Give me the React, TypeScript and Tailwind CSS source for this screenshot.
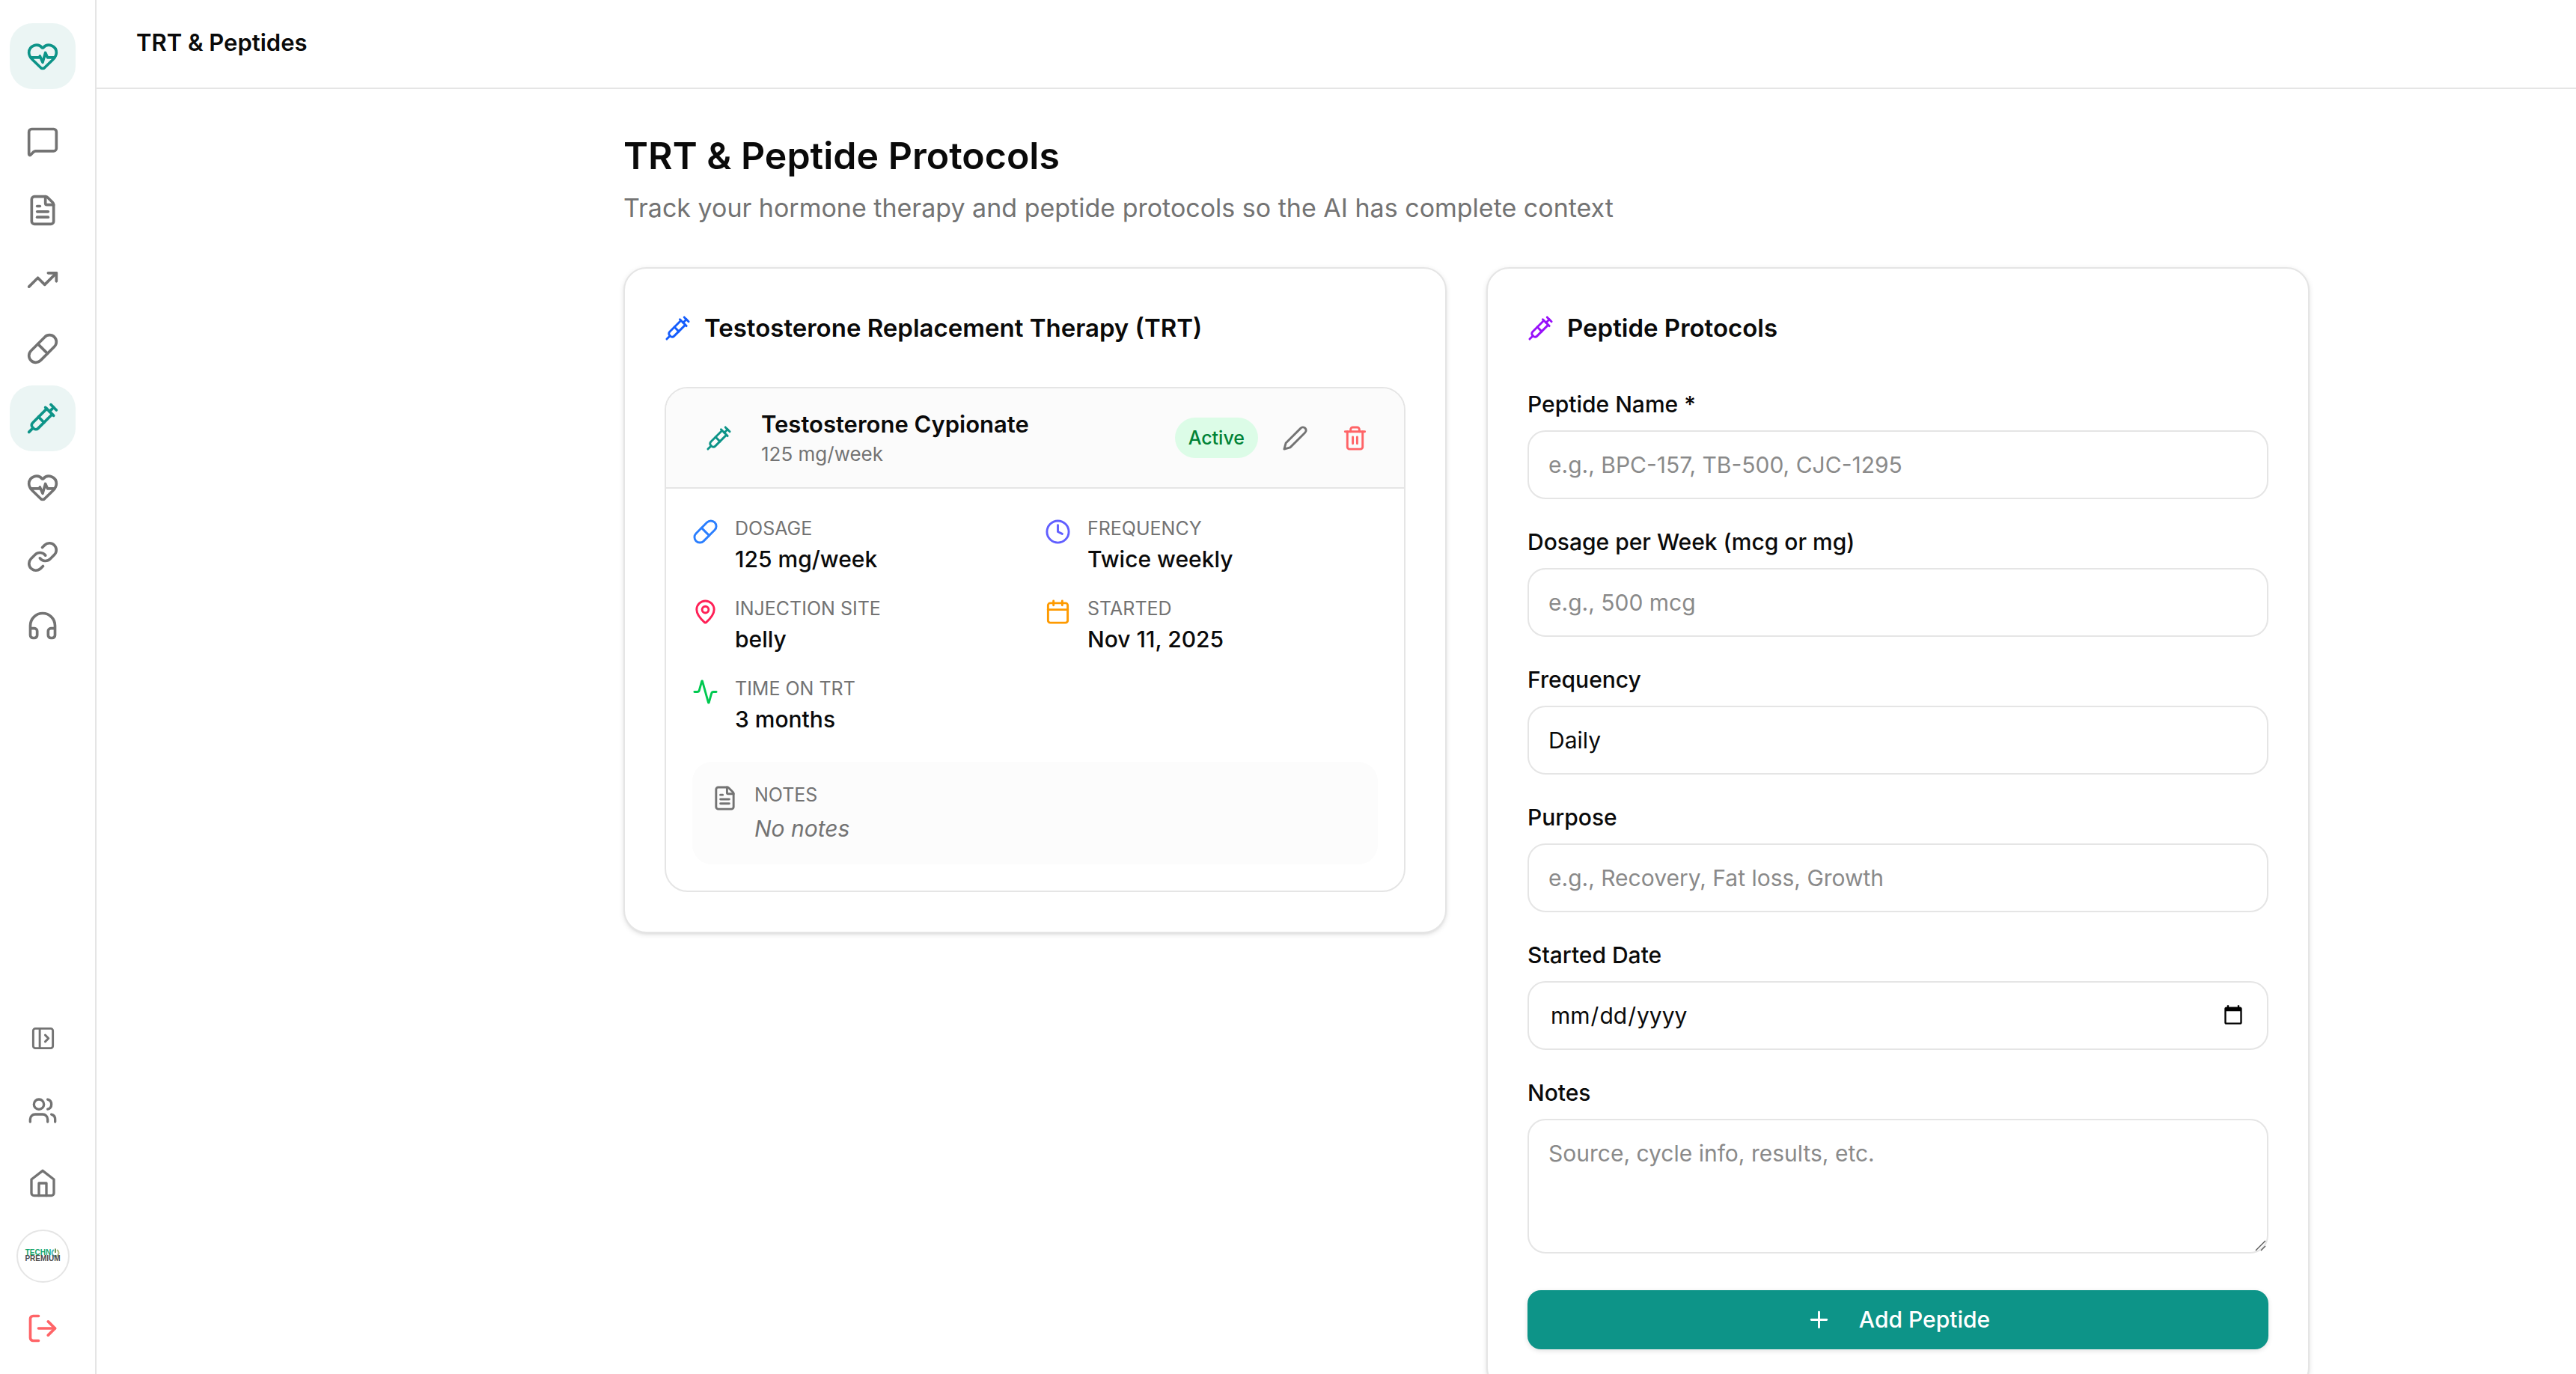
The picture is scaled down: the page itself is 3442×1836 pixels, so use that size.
import type { ComponentType, ReactNode } from "react";
import {
  Activity,
  Calendar,
  Clock,
  FileText,
  Headphones,
  HeartPulse,
  Link,
  LogOut,
  MapPin,
  MessageSquare,
  PanelLeftOpen,
  Pill,
  Plus,
  Syringe,
  TrendingUp,
  Users,
} from "lucide-react";

type IconType = ComponentType<{ className?: string }>;

function HomeIcon({ className }: { className?: string }) {
  return (
    <svg viewBox="0 0 24 24" fill="none" stroke="currentColor" strokeWidth={2} strokeLinecap="round" strokeLinejoin="round" className={className}>
      <path d="m3 9 9-7 9 7v11a2 2 0 0 1-2 2H5a2 2 0 0 1-2-2z" />
      <polyline points="9 22 9 12 15 12 15 22" />
    </svg>
  );
}

function PencilIcon({ className }: { className?: string }) {
  return (
    <svg viewBox="0 0 24 24" fill="none" stroke="currentColor" strokeWidth={2} strokeLinecap="round" strokeLinejoin="round" className={className}>
      <path d="M17 3a2.85 2.83 0 1 1 4 4L7.5 20.5 2 22l1.5-5.5Z" />
    </svg>
  );
}

function TrashIcon({ className }: { className?: string }) {
  return (
    <svg viewBox="0 0 24 24" fill="none" stroke="currentColor" strokeWidth={2} strokeLinecap="round" strokeLinejoin="round" className={className}>
      <path d="M3 6h18" />
      <path d="M19 6v14a2 2 0 0 1-2 2H7a2 2 0 0 1-2-2V6" />
      <path d="M8 6V4a2 2 0 0 1 2-2h4a2 2 0 0 1 2 2v2" />
      <path d="M10 11v6M14 11v6" />
    </svg>
  );
}

const navItems: { label: string; icon: IconType; active?: boolean }[] = [
  { label: "Chat", icon: MessageSquare },
  { label: "Documents", icon: FileText },
  { label: "Trends", icon: TrendingUp },
  { label: "Supplements", icon: Pill },
  { label: "TRT & Peptides", icon: Syringe, active: true },
  { label: "Health", icon: HeartPulse },
  { label: "Connections", icon: Link },
  { label: "Support", icon: Headphones },
];

function Sidebar() {
  return (
    <aside className="flex h-full w-[129px] shrink-0 flex-col border-r-2 border-[#e5e5e5] pt-[31px] pb-[17px] pl-[13px]">
      <a href="#home" aria-label="Dashboard" className="flex size-[88px] items-center justify-center rounded-[31px] bg-[#ebf5f4] text-[#0d9488]">
        <HeartPulse className="size-[44px]" />
      </a>
      <nav className="mt-[26px] flex h-[735px] flex-col justify-between">
        {navItems.map(({ label, icon: Icon, active }) => (
          <a
            key={label}
            href="#nav"
            aria-label={label}
            className={
              active
                ? "flex size-[88px] items-center justify-center rounded-[31px] bg-[#ebf5f4] text-[#0d9488]"
                : "flex size-[88px] items-center justify-center rounded-[31px] text-[#737373]"
            }
          >
            <Icon className="size-[44px]" />
          </a>
        ))}
      </nav>
      <div className="mt-auto flex flex-col gap-[9px] text-[#737373]">
        <button type="button" aria-label="Expand sidebar" className="flex size-[88px] items-center justify-center">
          <PanelLeftOpen className="size-[35px]" />
        </button>
        <a href="#family" aria-label="Members" className="flex size-[88px] items-center justify-center">
          <Users className="size-[40px]" />
        </a>
        <a href="#home" aria-label="Home" className="flex size-[88px] items-center justify-center">
          <HomeIcon className="size-[40px]" />
        </a>
        <a href="#account" aria-label="Account" className="flex size-[88px] items-center justify-center">
          <span className="flex size-[71px] flex-col items-center justify-center rounded-full border-2 border-[#e5e5e5] font-['Liberation_Sans',sans-serif] text-[10px] leading-[8px] font-bold">
            <span className="flex items-center text-[#12a56c]">
              TECHN
              <svg viewBox="0 0 24 24" fill="none" strokeWidth={4} className="-my-[2px] size-[12px]">
                <path d="M8 4.500a9 9 0 0 0 4 17" stroke="#5cb8bd" />
                <path d="M16 4.500a9 9 0 0 1-4 17" stroke="#b5bb86" />
                <path d="M12 1v11" stroke="#6f9a5a" />
              </svg>
            </span>
            <span className="text-[#4a4a4a]">PREMIUM</span>
          </span>
        </a>
        <button type="button" aria-label="Log out" className="flex size-[88px] items-center justify-center text-[#ff6467]">
          <LogOut className="size-[44px]" />
        </button>
      </div>
    </aside>
  );
}

function Card({ icon, title, children }: { icon: ReactNode; title: string; children: ReactNode }) {
  return (
    <section className="rounded-[31px] border-2 border-[#e5e5e5] bg-white p-[53px] shadow-[0_2px_7px_rgba(0,0,0,0.1),0_2px_4px_-2px_rgba(0,0,0,0.1)]">
      <h2 className="mb-[52px] flex h-[53px] items-center gap-[18px] text-[33px] font-semibold">
        {icon}
        {title}
      </h2>
      {children}
    </section>
  );
}

function Detail({ icon, label, value }: { icon: ReactNode; label: string; value: string }) {
  return (
    <div className="flex gap-[22px]">
      <span className="mt-[5px]">{icon}</span>
      <dl>
        <dt className="text-[25px] leading-[37px] text-[#737373] uppercase">{label}</dt>
        <dd className="text-[30px] leading-[44px] font-medium">{value}</dd>
      </dl>
    </div>
  );
}

function TherapyCard() {
  return (
    <article className="overflow-hidden rounded-[31px] border-2 border-[#e5e5e5]">
      <header className="flex items-center border-b-2 border-[#e5e5e5] bg-[#fbfbfb] px-[35px] py-[26px]">
        <span className="flex size-[70px] items-center justify-center text-[#0d9488]">
          <Syringe className="size-[35px]" />
        </span>
        <div className="ml-[22px] flex-1">
          <h3 className="text-[31px] leading-[44px] font-semibold">Testosterone Cypionate</h3>
          <p className="text-[26px] leading-[36px] text-[#737373]">125 mg/week</p>
        </div>
        <div className="flex items-center gap-[18px]">
          <span className="rounded-full bg-[#dcfce7] px-[18px] py-[9px] text-[25px] leading-[36px] font-medium text-[#008236]">Active</span>
          <button type="button" aria-label="Edit protocol" className="flex size-[62px] items-center justify-center text-[#737373]">
            <PencilIcon className="size-[35px]" />
          </button>
          <button type="button" aria-label="Delete protocol" className="flex size-[62px] items-center justify-center text-[#ff6467]">
            <TrashIcon className="size-[35px]" />
          </button>
        </div>
      </header>
      <div className="p-[35px]">
        <div className="grid grid-cols-2 gap-x-[26px] gap-y-[26px]">
          <Detail icon={<Pill className="size-[35px] text-[#2b7fff]" />} label="Dosage" value="125 mg/week" />
          <Detail icon={<Clock className="size-[35px] text-[#615fff]" />} label="Frequency" value="Twice weekly" />
          <Detail icon={<MapPin className="size-[35px] text-[#ff2056]" />} label="Injection Site" value="belly" />
          <Detail icon={<Calendar className="size-[35px] text-[#fe9a00]" />} label="Started" value="Nov 11, 2025" />
          <Detail icon={<Activity className="size-[35px] text-[#00c950]" />} label="Time on TRT" value="3 months" />
        </div>
        <div className="mt-[35px] flex gap-[22px] rounded-[26px] bg-[#fcfcfc] p-[26px] text-[#737373]">
          <FileText className="mt-[5px] size-[35px]" />
          <div>
            <h4 className="text-[25px] leading-[37px] uppercase">Notes</h4>
            <p className="mt-[4px] text-[30px] leading-[44px] italic">No notes</p>
          </div>
        </div>
      </div>
    </article>
  );
}

const controlClass =
  "block h-[92px] w-full appearance-none rounded-[24px] border-2 border-[#e5e5e5] bg-white text-[30px] outline-none placeholder:text-[#8a8a8a]";

function Field({ id, label, children }: { id: string; label: string; children: ReactNode }) {
  return (
    <div>
      <label htmlFor={id} className="mb-[13px] block text-[30px] leading-[44px] font-medium">
        {label}
      </label>
      {children}
    </div>
  );
}

function PeptideForm() {
  return (
    <form className="flex flex-col gap-[35px] pt-px">
      <Field id="name" label="Peptide Name *">
        <input id="name" type="text" placeholder="e.g., BPC-157, TB-500, CJC-1295" className={`${controlClass} px-[26px]`} />
      </Field>
      <Field id="dosage" label="Dosage per Week (mcg or mg)">
        <input id="dosage" type="text" placeholder="e.g., 500 mcg" className={`${controlClass} px-[26px]`} />
      </Field>
      <Field id="frequency" label="Frequency">
        <select id="frequency" defaultValue="Daily" className={`${controlClass} px-[26px]`}>
          <option>Daily</option>
          <option>Twice weekly</option>
          <option>Weekly</option>
        </select>
      </Field>
      <Field id="purpose" label="Purpose">
        <input id="purpose" type="text" placeholder="e.g., Recovery, Fat loss, Growth" className={`${controlClass} px-[26px]`} />
      </Field>
      <Field id="started" label="Started Date">
        <input id="started" type="date" className={`${controlClass} px-[28px]`} />
      </Field>
      <Field id="notes" label="Notes">
        <div className="relative mb-[14px]">
          <textarea
            id="notes"
            placeholder="Source, cycle info, results, etc."
            className="block h-[180px] w-full resize-none rounded-[24px] border-2 border-[#e5e5e5] px-[26px] py-[22px] text-[30px] leading-[44px] outline-none placeholder:text-[#8a8a8a]"
          />
          <svg viewBox="0 0 16 16" stroke="#555555" strokeWidth={1.4} className="absolute right-[3px] bottom-[3px] size-[16px]">
            <path d="M2 15 15 2M9 15l6-6" />
          </svg>
        </div>
      </Field>
      <button
        type="button"
        className="flex h-[79px] items-center justify-center gap-[36px] rounded-[18px] bg-[#0d9488] text-[30px] font-medium text-white shadow-[0_2px_6px_rgba(0,0,0,0.12)]"
      >
        <Plus className="size-[35px]" />
        Add Peptide
      </button>
    </form>
  );
}

export default function App() {
  return (
    <div className="flex h-screen overflow-hidden bg-white font-['Inter',sans-serif] text-[#0a0a0a]">
      <Sidebar />
      <div className="flex min-w-0 flex-1 flex-col">
        <header className="flex h-[119px] shrink-0 items-center border-b-2 border-[#e5e5e5] px-[53px] pb-[3px]">
          <span className="text-[31px] leading-[44px] font-semibold">TRT &amp; Peptides</span>
        </header>
        <main className="flex-1 overflow-y-auto py-[53px] pr-[356px] pl-[704px] [scrollbar-width:none]">
          <h1 className="text-[50px] leading-[72px] font-semibold">TRT &amp; Peptide Protocols</h1>
          <p className="mt-[7px] text-[34px] leading-[53px] text-[#737373]">
            Track your hormone therapy and peptide protocols so the AI has complete context
          </p>
          <div className="mt-[53px] grid grid-cols-2 items-start gap-[53px]">
            <Card icon={<Syringe className="size-[35px] text-[#155dfc]" />} title="Testosterone Replacement Therapy (TRT)">
              <TherapyCard />
            </Card>
            <Card icon={<Syringe className="size-[35px] text-[#9810fa]" />} title="Peptide Protocols">
              <PeptideForm />
            </Card>
          </div>
        </main>
      </div>
    </div>
  );
}
